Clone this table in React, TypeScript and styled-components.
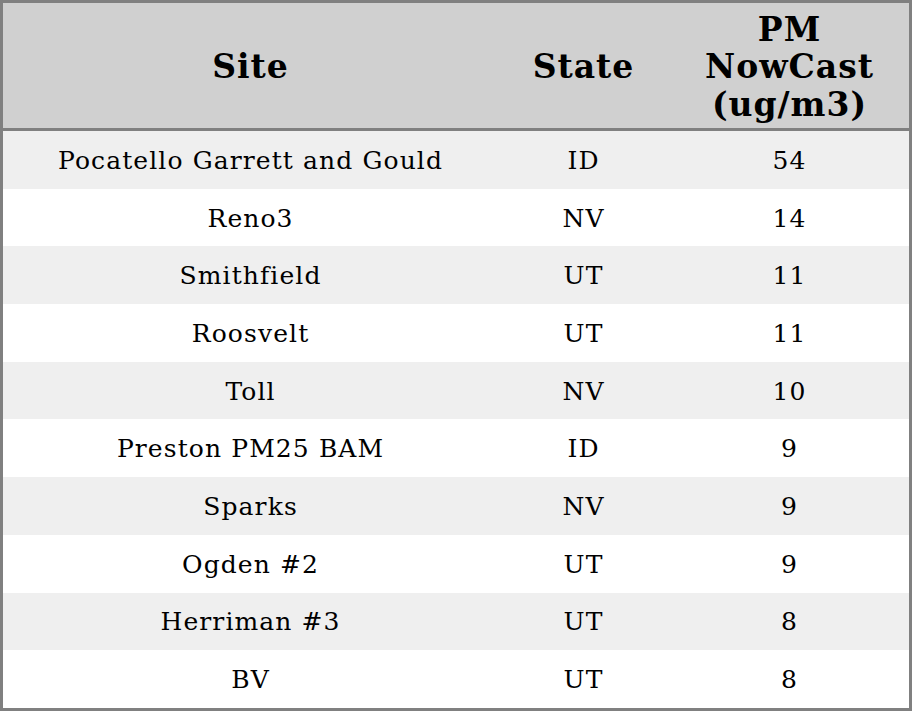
import styled, { createGlobalStyle } from 'styled-components';

const GlobalStyle = createGlobalStyle`
  html, body {
    margin: 0;
    padding: 0;
    background: #ffffff;
  }
  * {
    box-sizing: border-box;
  }
`;

interface SiteReading {
  site: string;
  state: string;
  pm: number;
}

const readings: SiteReading[] = [
  { site: 'Pocatello Garrett and Gould', state: 'ID', pm: 54 },
  { site: 'Reno3', state: 'NV', pm: 14 },
  { site: 'Smithfield', state: 'UT', pm: 11 },
  { site: 'Roosvelt', state: 'UT', pm: 11 },
  { site: 'Toll', state: 'NV', pm: 10 },
  { site: 'Preston PM25 BAM', state: 'ID', pm: 9 },
  { site: 'Sparks', state: 'NV', pm: 9 },
  { site: 'Ogden #2', state: 'UT', pm: 9 },
  { site: 'Herriman #3', state: 'UT', pm: 8 },
  { site: 'BV', state: 'UT', pm: 8 },
];

const Table = styled.div`
  width: 912px;
  height: 711px;
  border: 3px solid #808080;
  font-family: 'DejaVu Serif', 'Liberation Serif', serif;
  color: #000000;
  display: flex;
  flex-direction: column;
`;

const HeaderRow = styled.div`
  display: grid;
  grid-template-columns: 494px 172px 240px;
  height: 128px;
  background-color: #d0d0d0;
  border-bottom: 3px solid #808080;
`;

const HeaderCell = styled.div`
  display: flex;
  align-items: center;
  justify-content: center;
  text-align: center;
  padding: 3px 6px 0 7px;
  font-size: 33px;
  font-weight: 700;
  letter-spacing: 1px;
  line-height: 37.5px;
`;

const Row = styled.div<{ $striped: boolean }>`
  display: grid;
  grid-template-columns: 494px 172px 240px;
  height: 57.7px;
  background-color: ${(p) => (p.$striped ? '#efefef' : '#ffffff')};
`;

const Cell = styled.div`
  display: flex;
  align-items: center;
  justify-content: center;
  padding: 2px 0 0 1.1px;
  font-size: 25px;
  letter-spacing: 1.1px;
  line-height: 28px;
  text-align: center;
`;

export default function App() {
  return (
    <>
      <GlobalStyle />
      <Table>
        <HeaderRow>
          <HeaderCell>Site</HeaderCell>
          <HeaderCell>State</HeaderCell>
          <HeaderCell>PM NowCast (ug/m3)</HeaderCell>
        </HeaderRow>
        {readings.map((r, i) => (
          <Row key={r.site} $striped={i % 2 === 0}>
            <Cell>{r.site}</Cell>
            <Cell>{r.state}</Cell>
            <Cell>{r.pm}</Cell>
          </Row>
        ))}
      </Table>
    </>
  );
}
